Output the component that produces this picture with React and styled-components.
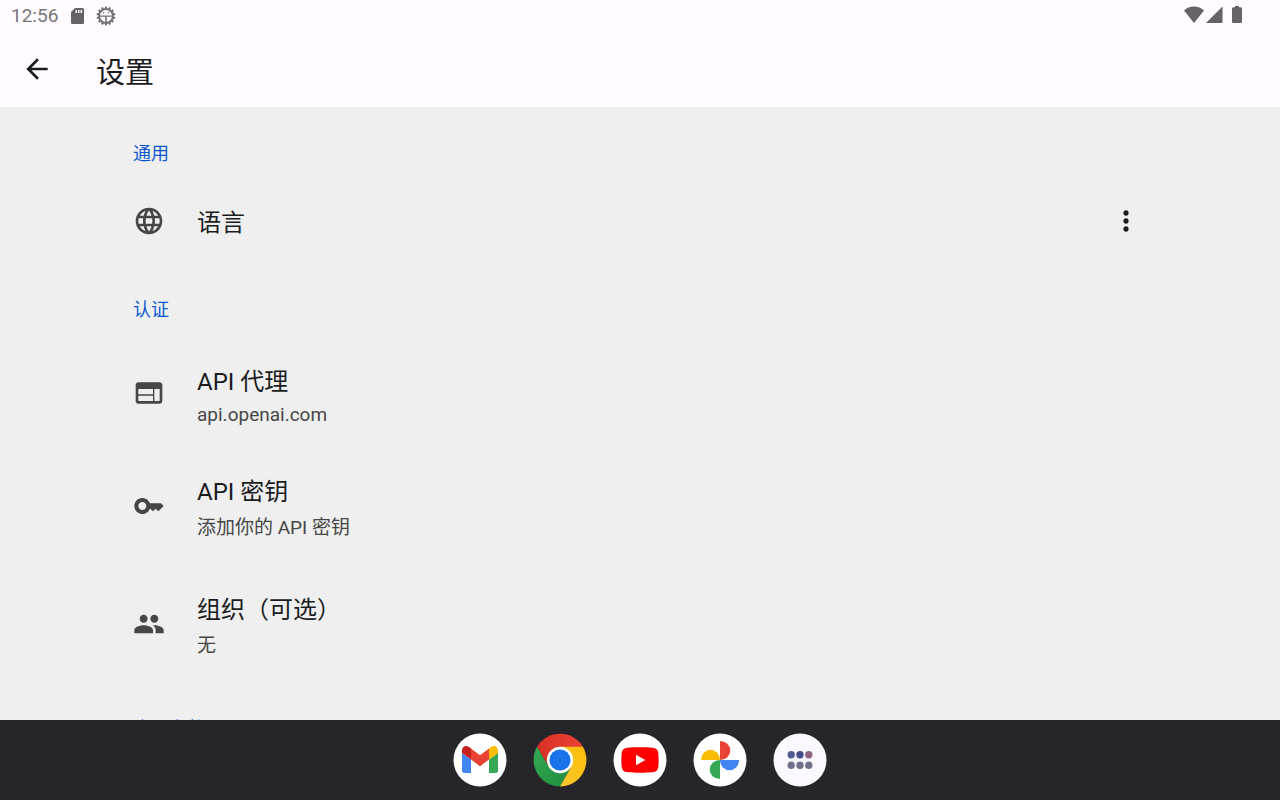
import React from "react";
import styled, { createGlobalStyle } from "styled-components";

const GlobalStyle = createGlobalStyle`
  *, *::before, *::after { box-sizing: border-box; }
  html, body, #root { height: 100%; }
  body {
    margin: 0;
    font-family: Roboto, "Noto Sans CJK SC", sans-serif;
    color: #1a1c1e;
    background: #efefef;
  }
  h1, h2, p, ul { margin: 0; padding: 0; font-weight: 400; }
  button { font: inherit; color: inherit; background: none; border: 0; padding: 0; cursor: pointer; }
`;

const Screen = styled.div`
  display: flex;
  flex-direction: column;
  height: 100vh;
  overflow: hidden;
`;

const StatusBar = styled.div`
  flex: none;
  display: flex;
  justify-content: space-between;
  height: 32px;
  padding: 0 34px 0 11px;
  background: #fffbff;
  color: #656366;
`;

const StatusGroup = styled.div`
  display: flex;
  align-items: center;
  gap: 9px;
  padding-bottom: ${(p) => p.$lift || "0"};
`;

const Clock = styled.time`
  font-size: 19px;
  line-height: 32px;
  color: #77757a;
`;

const AppBar = styled.header`
  flex: none;
  display: flex;
  align-items: center;
  height: 75px;
  padding: 0 16px 2px;
  gap: 38px;
  background: #fffbff;
`;

const IconButton = styled.button`
  display: grid;
  place-items: center;
  width: 42px;
  height: 42px;
`;

const Title = styled.h1`
  padding-top: 8px;
  font-size: 29px;
  line-height: 40px;
`;

const Content = styled.main`
  flex: 1;
  min-height: 0;
  overflow: hidden;
  padding: 0 133px;
`;

const SectionTitle = styled.h2`
  padding: 33px 0 15px;
  font-size: 18px;
  line-height: 28px;
  color: #0b57d0;
`;

const List = styled.ul`
  list-style: none;
  padding-bottom: ${(p) => p.$after || "0"};
`;

const Row = styled.li`
  display: flex;
  align-items: center;
  gap: 32px;
  min-height: ${(p) => p.$height};
`;

const RowText = styled.div`
  flex: 1;
  padding-top: ${(p) => (p.$single ? "4px" : "8px")};
`;

const RowTitle = styled.p`
  font-size: 24px;
  line-height: 36px;
`;

const RowNote = styled.p`
  font-size: 19px;
  line-height: ${(p) => (p.$latin ? "30px" : "36px")};
  color: #464646;
`;

const Glyph = styled.svg`
  flex: none;
  display: block;
  width: ${(p) => p.$size || "32px"};
  height: ${(p) => p.$size || "32px"};
  fill: ${(p) => p.$color || "currentColor"};
`;

const Dock = styled.nav`
  flex: none;
  display: flex;
  align-items: center;
  justify-content: center;
  gap: 26px;
  height: 80px;
  background: #26252a;
`;

const AppButton = styled.button`
  width: 54px;
  height: 54px;
  border-radius: 50%;

  svg { display: block; width: 54px; height: 54px; }
`;

const icons = {
  language:
    "M11.99 2C6.47 2 2 6.48 2 12s4.47 10 9.99 10C17.52 22 22 17.52 22 12S17.52 2 11.99 2zm6.93 6h-2.95c-.32-1.25-.78-2.45-1.38-3.56 1.84.63 3.37 1.91 4.33 3.56zM12 4.04c.83 1.2 1.48 2.53 1.91 3.96h-3.82c.43-1.43 1.08-2.76 1.91-3.96zM4.26 14C4.1 13.36 4 12.69 4 12s.1-1.36.26-2h3.38c-.08.66-.14 1.32-.14 2s.06 1.34.14 2H4.26zm.82 2h2.95c.32 1.25.78 2.45 1.38 3.56-1.84-.63-3.37-1.9-4.33-3.56zm2.95-8H5.08c.96-1.66 2.49-2.93 4.33-3.56C8.81 5.55 8.35 6.75 8.03 8zM12 19.96c-.83-1.2-1.48-2.53-1.91-3.96h3.82c-.43 1.43-1.08 2.76-1.91 3.96zM14.34 14H9.66c-.09-.66-.16-1.32-.16-2s.07-1.35.16-2h4.68c.09.65.16 1.32.16 2s-.07 1.34-.16 2zm.25 5.56c.6-1.11 1.06-2.31 1.38-3.56h2.95c-.96 1.65-2.49 2.93-4.33 3.56zM16.36 14c.08-.66.14-1.32.14-2s-.06-1.34-.14-2h3.38c.16.64.26 1.31.26 2s-.1 1.36-.26 2h-3.38z",
  web: "M20 4H4c-1.1 0-1.99.9-1.99 2L2 18c0 1.1.9 2 2 2h16c1.1 0 2-.9 2-2V6c0-1.1-.9-2-2-2zm-5 14H4v-4h11v4zm0-5H4V9h11v4zm5 5h-4V9h4v9z",
  key: "M21 10h-8.35C11.83 7.67 9.61 6 7 6c-3.31 0-6 2.69-6 6s2.69 6 6 6c2.61 0 4.83-1.67 5.65-4H13l2 2 2-2 2 2 4-4.04L21 10zM7 15c-1.65 0-3-1.35-3-3s1.35-3 3-3 3 1.35 3 3-1.35 3-3 3z",
  group:
    "M16 11c1.66 0 2.99-1.34 2.99-3S17.66 5 16 5c-1.66 0-3 1.34-3 3s1.34 3 3 3zm-8 0c1.66 0 2.99-1.34 2.99-3S9.66 5 8 5C6.34 5 5 6.34 5 8s1.34 3 3 3zm0 2c-2.33 0-7 1.17-7 3.5V19h14v-2.5c0-2.33-4.67-3.5-7-3.5zm8 0c-.29 0-.62.02-.97.05 1.16.84 1.97 1.97 1.97 3.45V19h6v-2.5c0-2.33-4.67-3.5-7-3.5z",
  more: "M12 8c1.1 0 2-.9 2-2s-.9-2-2-2-2 .9-2 2 .9 2 2 2zm0 2c-1.1 0-2 .9-2 2s.9 2 2 2 2-.9 2-2-.9-2-2-2zm0 6c-1.1 0-2 .9-2 2s.9 2 2 2 2-.9 2-2-.9-2-2-2z",
  back: "M20 11H7.830l5.590-5.590L12 4l-8 8 8 8 1.410-1.410L7.830 13H20v-2z",
};

const RowIcon = ({ name }) => (
  <Glyph viewBox="0 0 24 24" $color="#464646" aria-hidden="true">
    <path d={icons[name]} />
  </Glyph>
);

const authRows = [
  { icon: "web", title: "API 代理", note: "api.openai.com", latin: true, height: "107px" },
  { icon: "key", title: "API 密钥", note: "添加你的 API 密钥", height: "120px" },
  { icon: "group", title: "组织（可选）", note: "无", height: "116px" },
];

const SdCard = () => (
  <Glyph viewBox="0 0 20 20" $size="20px" aria-hidden="true">
    <path
      fillRule="evenodd"
      d="M8 2h7.500A1.500 1.500 0 0 1 17 3.500v13a1.500 1.500 0 0 1-1.500 1.500h-10A1.500 1.500 0 0 1 4 16.500V6zM8.500 4v3H10V4zm2.500 0v3h1.500V4zm2.500 0v3H15V4z"
    />
  </Glyph>
);

const teeth = Array.from({ length: 14 }, (_, i) => (i * 360) / 14);

const Gear = () => (
  <Glyph viewBox="0 0 20 20" $size="20px" $color="#737175" aria-hidden="true">
    <circle cx="10" cy="10" r="7" fill="none" stroke="#737175" strokeWidth="2" />
    {teeth.map((a) => (
      <rect key={a} x="9" y="0.6" width="2" height="2.4" transform={`rotate(${a} 10 10)`} />
    ))}
    <path d="M3 9.500h14v1.300h-6.200V17H9.200v-6.200H3z" />
    <circle cx="7.500" cy="6.800" r=".8" />
    <circle cx="12.500" cy="6.800" r=".8" />
  </Glyph>
);

const Signals = () => (
  <svg width="62" height="20" viewBox="0 0 62 20" fill="currentColor" role="img" aria-label="Wi-Fi, 信号, 电池">
    <path d="M0 5.500C2.800 3 6 1.500 10 1.500s7.200 1.500 10 4L10 18z" />
    <path d="M38.500 1.500V18H22z" />
    <rect x="51" y="1" width="4" height="3" />
    <rect x="48" y="2.300" width="10" height="15.700" rx="1.500" />
  </svg>
);

const Gmail = () => (
  <svg viewBox="0 0 54 54" aria-hidden="true">
    <circle cx="27" cy="27" r="26.500" fill="#fff" />
    <path d="M9 20l9 6.500V40h-6.500A2.500 2.500 0 0 1 9 37.500z" fill="#4285f4" />
    <path d="M36 26.500l9-6.500v17.500a2.500 2.500 0 0 1-2.500 2.500H36z" fill="#34a853" />
    <path d="M18 15.500l9 6.800 9-6.800v11l-9 6.800-9-6.800z" fill="#ea4335" />
    <path d="M9 20v-2.500c0-4 4-5.500 7-3.500l2 1.500v11z" fill="#c5221f" />
    <path d="M45 20v-2.500c0-4-4-5.500-7-3.500l-2 1.500v11z" fill="#fbbc04" />
  </svg>
);

const Chrome = () => (
  <svg viewBox="0 0 54 54" aria-hidden="true">
    <defs>
      <linearGradient id="chrome-red"><stop offset="0" stopColor="#d93025" /><stop offset="1" stopColor="#ea4335" /></linearGradient>
      <linearGradient id="chrome-green" x1="1" y1="1" x2="0" y2="0"><stop offset="0" stopColor="#1e8e3e" /><stop offset="1" stopColor="#34a853" /></linearGradient>
      <linearGradient id="chrome-yellow" x1="0" y1="1" x2="1" y2="0"><stop offset="0" stopColor="#fcc934" /><stop offset="1" stopColor="#fbbc04" /></linearGradient>
    </defs>
    <path d="M27 27L15.500 33.600 4.100 13.800A26.500 26.500 0 0 1 49.900 13.800z" fill="url(#chrome-red)" />
    <path d="M27 27l11.400 6.600L27 53.500A26.500 26.500 0 0 1 4.100 13.800L15.500 33.600z" fill="url(#chrome-green)" />
    <path d="M27 13.800H49.900A26.500 26.500 0 0 1 27 53.500L38.400 33.600z" fill="url(#chrome-yellow)" />
    <circle cx="27" cy="27" r="13.200" fill="#fff" />
    <circle cx="27" cy="27" r="10.500" fill="#1a73e8" />
  </svg>
);

const YouTube = () => (
  <svg viewBox="0 0 54 54" aria-hidden="true">
    <circle cx="27" cy="27" r="26.500" fill="#fff" />
    <path d="M27 14.200c5 0 11 .1 13.800.7 2.500.5 4 2 4.400 4.500.6 4.500.6 10.700 0 15.200-.4 2.500-1.900 4-4.400 4.500-5 .9-22.600.9-27.600 0-2.500-.5-4-2-4.400-4.500-.6-4.500-.6-10.700 0-15.200.4-2.500 1.900-4 4.400-4.500 2.800-.6 8.800-.7 13.800-.7z" fill="#f00" />
    <path d="M23 21.700v10.600l9.300-5.300z" fill="#fff" />
  </svg>
);

const Photos = () => (
  <svg viewBox="0 0 54 54" aria-hidden="true">
    <circle cx="27" cy="27" r="26.500" fill="#fff" />
    <path d="M27 8a10.300 9.500 0 0 1 0 19z" fill="#ea4335" />
    <path d="M46 27a9.500 10.300 0 0 1-19 0z" fill="#4285f4" />
    <path d="M27 46a10.300 9.500 0 0 1 0-19z" fill="#34a853" />
    <path d="M8 27a9.500 10.300 0 0 1 19 0z" fill="#fbbc04" />
  </svg>
);

const AllApps = () => (
  <svg viewBox="0 0 54 54" aria-hidden="true">
    <circle cx="27" cy="27" r="26.500" fill="#fcf8ff" />
    <circle cx="18.200" cy="21.700" r="3.700" fill="#515b92" />
    <circle cx="27" cy="21.700" r="3.700" fill="#434e8a" />
    <circle cx="35.800" cy="21.700" r="3.700" fill="#8c6480" />
    {[18.2, 27, 35.8].map((x) => (
      <circle key={x} cx={x} cy="32.300" r="3.700" fill="#6e7189" />
    ))}
  </svg>
);

const dockApps = [
  ["Gmail", Gmail],
  ["Chrome", Chrome],
  ["YouTube", YouTube],
  ["相册", Photos],
  ["所有应用", AllApps],
];

export default function App() {
  return (
    <Screen>
      <GlobalStyle />
      <StatusBar>
        <StatusGroup>
          <Clock>12:56</Clock>
          <SdCard />
          <Gear />
        </StatusGroup>
        <StatusGroup $lift="2px">
          <Signals />
        </StatusGroup>
      </StatusBar>
      <AppBar>
        <IconButton type="button" aria-label="返回">
          <Glyph viewBox="0 0 24 24" aria-hidden="true"><path d={icons.back} /></Glyph>
        </IconButton>
        <Title>设置</Title>
      </AppBar>
      <Content>
        <SectionTitle>通用</SectionTitle>
        <List $after="4px">
          <Row $height="76px">
            <RowIcon name="language" />
            <RowText $single><RowTitle>语言</RowTitle></RowText>
            <IconButton type="button" aria-label="更多选项">
              <Glyph viewBox="0 0 24 24" aria-hidden="true"><path d={icons.more} /></Glyph>
            </IconButton>
          </Row>
        </List>
        <SectionTitle>认证</SectionTitle>
        <List>
          {authRows.map((r) => (
            <Row key={r.title} $height={r.height}>
              <RowIcon name={r.icon} />
              <RowText>
                <RowTitle>{r.title}</RowTitle>
                <RowNote $latin={r.latin}>{r.note}</RowNote>
              </RowText>
            </Row>
          ))}
        </List>
        <SectionTitle>应用参数</SectionTitle>
      </Content>
      <Dock aria-label="任务栏">
        {dockApps.map(([name, Icon]) => (
          <AppButton key={name} type="button" aria-label={name}><Icon /></AppButton>
        ))}
      </Dock>
    </Screen>
  );
}
